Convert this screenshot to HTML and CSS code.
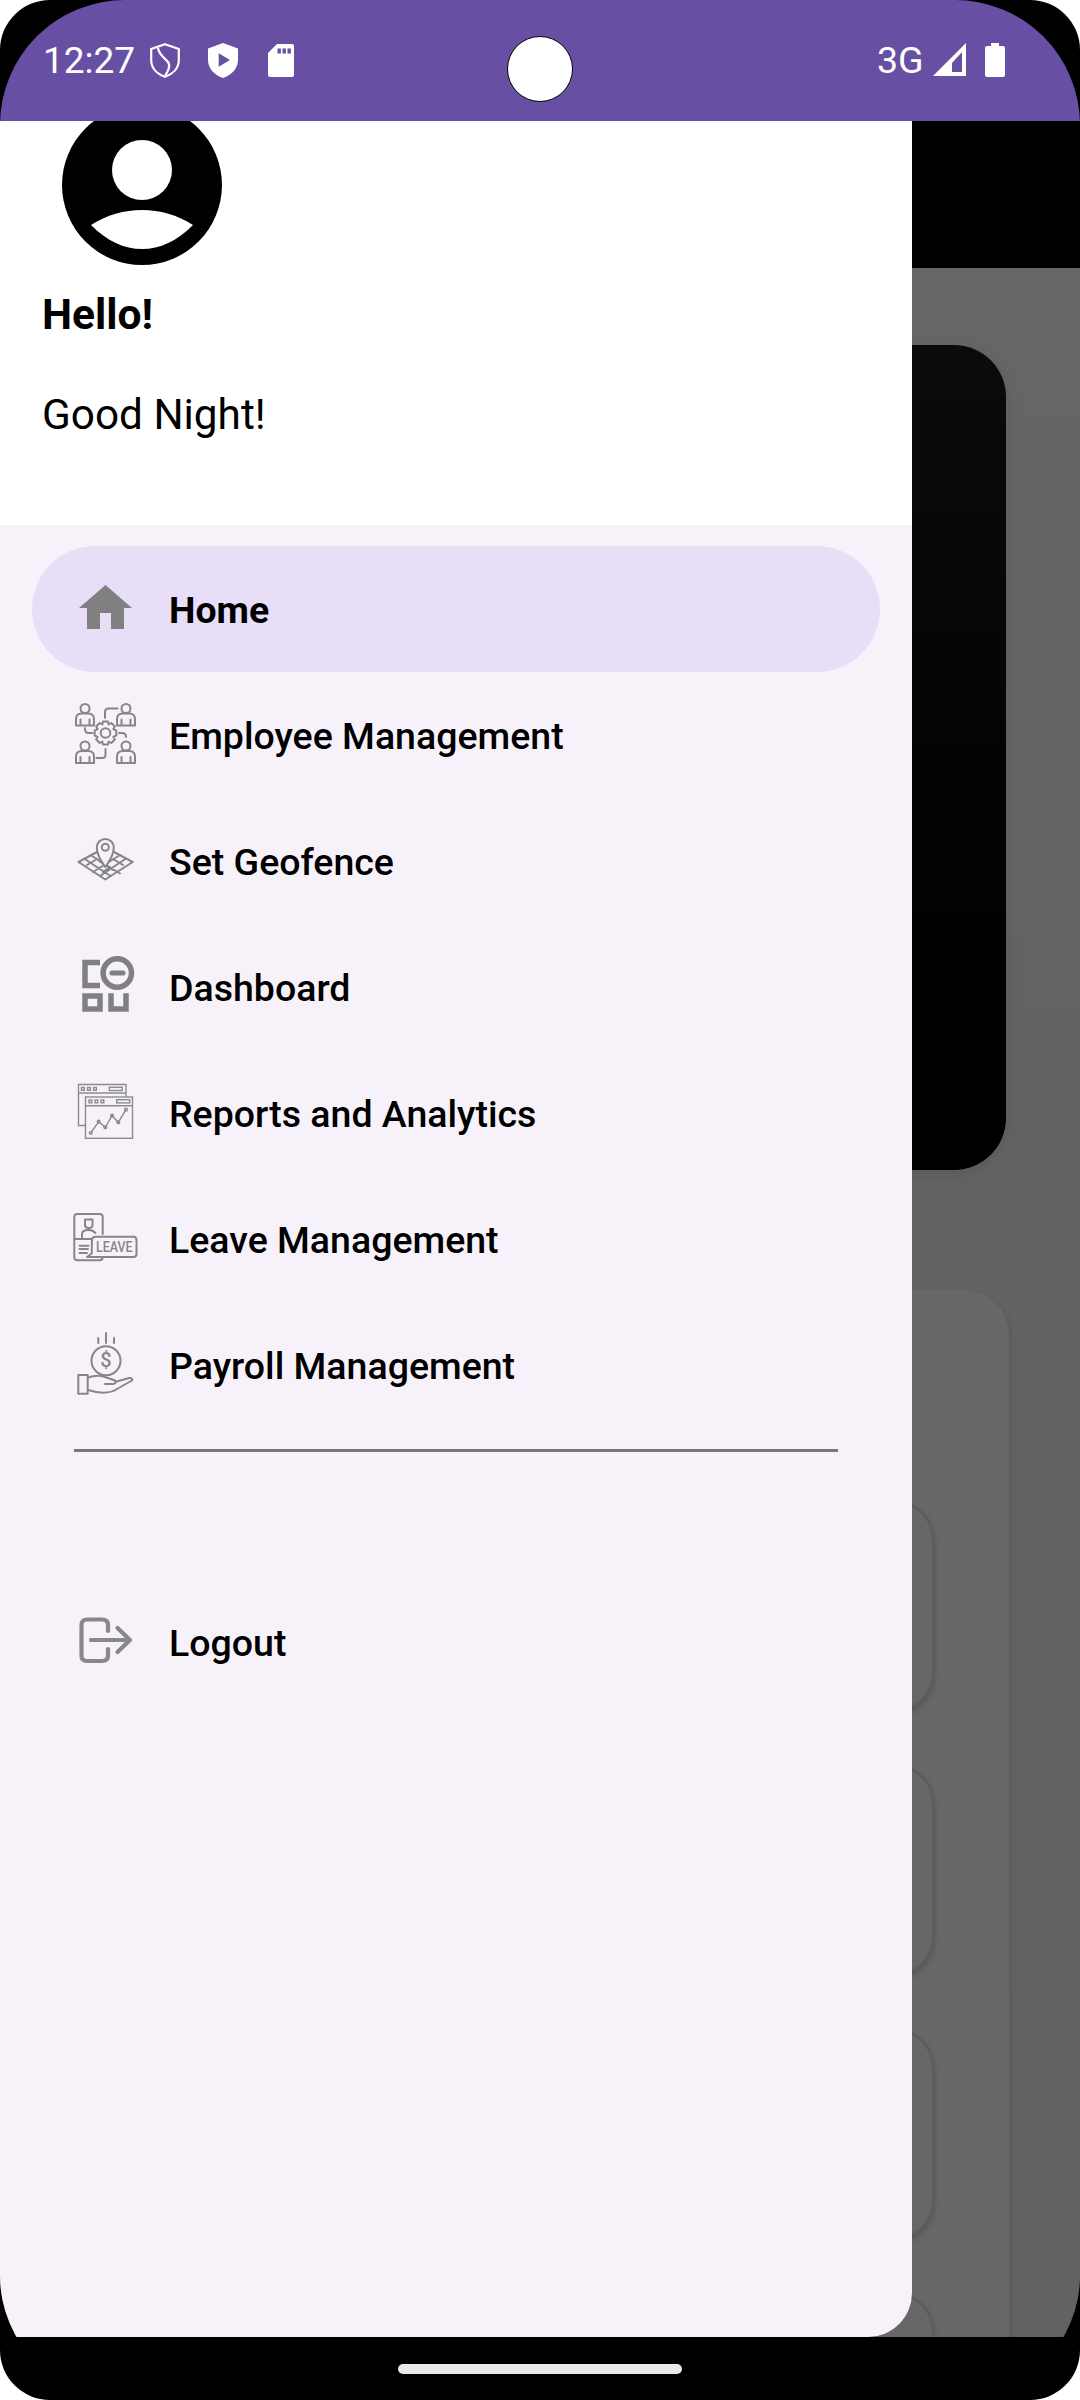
FILE: index.html
```html
<!DOCTYPE html>
<html lang="en">
<head>
<meta charset="utf-8">
<title>Attendance</title>
<link rel="stylesheet" href="styles.css">
</head>
<body>
<div class="device">
  <div class="screen">
    <header class="statusbar">
      <div class="status-left">
        <span class="time">12:27</span>
        <svg class="st st-shield1" viewBox="0 0 30 35"><path class="w-line" d="M15 1.200 28.800 6V17C28.800 25 23 31 15 33.800 7 31 1.200 25 1.200 17V6Z"/><path class="w-line" d="M8 5C9 12 14 14 18 19 21 23 18 28 15 33"/></svg>
        <svg class="st st-shield2" viewBox="0 0 30 35"><path class="w-fill" fill-rule="evenodd" d="M15 0 30 5.500V17C30 25 24 32 15 35 6 32 0 25 0 17V5.500ZM10.700 10.300V23.700L22 17Z"/></svg>
        <svg class="st st-sd" viewBox="0 0 26 33"><path class="w-fill" d="M9 0H24Q26 0 26 2V31Q26 33 24 33H2Q0 33 0 31V9Z"/><path class="p-fill" d="M9.500 4.500h3.400v5H9.500zM14.500 4.500h3.400v5h-3.400zM19.500 4.500h3.400v5h-3.400z"/></svg>
      </div>
      <div class="status-right">
        <span class="net">3G</span>
        <svg class="st st-signal" viewBox="0 0 33 33"><path class="w-fill" fill-rule="evenodd" d="M33 0V33H0ZM19 20 29 9V29H19Z"/></svg>
        <svg class="st st-batt" viewBox="0 0 20 34"><path class="w-fill" d="M6 0H14V3H18Q20 3 20 5V32Q20 34 18 34H2Q0 34 0 32V5Q0 3 2 3H6Z"/></svg>
      </div>
    </header>

    <main class="app">
      <div class="app-top"></div>
      <div class="app-body">
        <div class="hero"></div>
        <div class="panel">
          <div class="tile"></div>
          <div class="tile"></div>
          <div class="tile"></div>
          <div class="tile"></div>
        </div>
      </div>
    </main>

    <footer class="navbar"><span class="handle"></span></footer>

    <aside class="drawer">
      <section class="drawer-head">
        <svg class="avatar" viewBox="0 0 160 160">
          <circle cx="80" cy="80" r="80" fill="#000"/>
          <circle cx="80" cy="65" r="30" fill="#fff"/>
          <path d="M29 120C60 100 100 100 131 120 115 136 98 144 80 144 62 144 45 136 29 120Z" fill="#fff"/>
        </svg>
        <div class="hello">Hello!</div>
        <div class="greet">Good Night!</div>
      </section>
      <nav class="menu">
        <a class="item item-active">
          <svg class="ico" viewBox="0 0 64 64"><path class="g-fill" fill-rule="evenodd" d="M32.500 8 59 31H51V52H38V36H27V52H14V31H6Z"/></svg>
          <span class="label">Home</span>
        </a>
        <a class="item">
          <svg class="ico" viewBox="0 0 64 64"><g class="g-line">
            <circle cx="12" cy="5.500" r="4.500"/><path d="M3 22.500V16Q3 11 8 10.500H16Q21 11 21 16V22.500ZM7.500 22V16.500M16.500 22V16.500"/>
            <circle cx="53" cy="5.500" r="4.500"/><path d="M44 22.500V16Q44 11 49 10.500H57Q62 11 62 16V22.500ZM48.500 22V16.500M57.500 22V16.500"/>
            <circle cx="12" cy="43" r="4.500"/><path d="M3 60V53.500Q3 48.500 8 48H16Q21 48.500 21 53.500V60ZM7.500 59.500V54M16.500 59.500V54"/>
            <circle cx="53" cy="43" r="4.500"/><path d="M44 60V53.500Q44 48.500 49 48H57Q62 48.500 62 53.500V60ZM48.500 59.500V54M57.500 59.500V54"/>
            <path d="M32 15V9Q32 5.500 35.500 5.500H44.500M12 25V26Q12 30 16 30H19.500M46 30H49Q53 30 53 34M32.500 46V52Q32.500 55 29.500 55H23.500"/>
            <path d="M30 18.500H35L35.700 21.500 38.300 20 41.800 23.500 40.300 26.200 43.300 27.500V32.500L40.300 33.800 41.800 36.500 38.300 40 35.700 38.500 35 41.500H30L29.300 38.500 26.700 40 23.200 36.500 24.700 33.800 21.700 32.500V27.500L24.700 26.200 23.200 23.500 26.700 20 29.300 21.500Z"/>
            <circle cx="32.500" cy="30" r="4.800"/>
          </g></svg>
          <span class="label">Employee Management</span>
        </a>
        <a class="item">
          <svg class="ico" viewBox="0 0 64 64"><g class="g-line">
            <path d="M24 23 5.500 33 32.300 50.500 59.700 33 41 23"/>
            <path d="M11 29.500 37.500 47M17.500 26 47 44.500M53 29.500 27 47M47 26 20 43M26 32 40 41M14 36 24 30M40 30 50 36M30 43 37 38M22 37 30 42"/>
            <path class="bgf" d="M32.300 38C29 33 23.800 27 23.800 18.500A8.500 8.500 0 0 1 40.800 18.500C40.800 27 35.600 33 32.300 38Z"/>
            <circle cx="32.300" cy="18.300" r="3.500"/>
          </g></svg>
          <span class="label">Set Geofence</span>
        </a>
        <a class="item">
          <svg class="ico" viewBox="0 0 64 64"><g class="g-thick">
            <path d="M27 7.500H12V30.500H27"/>
            <circle cx="44.300" cy="18" r="14.200"/>
            <rect x="12" y="41" width="15" height="13"/>
            <path d="M38 38.300V54H53V38.300"/>
          </g><path class="g-minus" d="M39 18H50"/></svg>
          <span class="label">Dashboard</span>
        </a>
        <a class="item">
          <svg class="ico" viewBox="0 0 64 64"><g class="g-thin">
            <path d="M53 16V3.500H5.500V44.500H12M5.500 12H53"/>
            <rect x="8.500" y="6.500" width="2.800" height="2.800"/><rect x="14.500" y="6.500" width="2.800" height="2.800"/><rect x="20.500" y="6.500" width="2.800" height="2.800"/><rect x="36.300" y="6.300" width="13" height="3.200"/>
            <rect x="12.500" y="16" width="47" height="41.300"/>
            <path d="M12.500 24.700H59.500"/>
            <rect x="16" y="19" width="2.800" height="2.800"/><rect x="22" y="19" width="2.800" height="2.800"/><rect x="28" y="19" width="2.800" height="2.800"/><rect x="43.700" y="18.700" width="13" height="3.200"/>
            <path d="M17.700 52 25.700 40.700 32.300 46.300 39 34.700 45.300 41.300 53 28.700"/>
            <circle cx="17.700" cy="52" r="1.400"/><circle cx="25.700" cy="40.700" r="1.400"/><circle cx="32.300" cy="46.300" r="1.400"/><circle cx="39" cy="34.700" r="1.400"/><circle cx="45.300" cy="41.300" r="1.400"/><circle cx="53" cy="28.700" r="1.400"/>
          </g></svg>
          <span class="label">Reports and Analytics</span>
        </a>
        <a class="item">
          <svg class="ico" viewBox="0 0 64 64"><g class="g-line">
            <path d="M29.700 27V10Q29.700 7 26.700 7H4.300Q1.300 7 1.300 10V50.300Q1.300 53.300 4.300 53.300H26.700Q29.700 53.300 29.700 50.300V50"/>
            <path d="M12 12.500H19.500V18Q19.500 21 15.700 21 12 21 12 18ZM9 31V27Q9 23 15.700 23 20 23 22.500 26M1.300 32H18M6.500 38.700H15.500M6.500 42H15M6.500 46H14"/>
            <path d="M19 33Q19 29.700 22.500 29.700H60.500Q63.500 29.700 63.500 33V47Q63.500 50 60.500 50H14L18.700 46.500Z"/>
          </g><text class="leave" x="23" y="45" textLength="36.500" lengthAdjust="spacingAndGlyphs">LEAVE</text></svg>
          <span class="label">Leave Management</span>
        </a>
        <a class="item">
          <svg class="ico" viewBox="0 0 64 64"><g class="g-line">
            <path d="M33 0V10M25.300 5V10M41 5V10"/>
            <circle cx="33" cy="27.700" r="14.500"/>
            <rect x="5.300" y="42" width="9.400" height="18.700"/>
            <path d="M15 44.500C22 42 27 42 32 44L42 47.500C44 49.500 42 51 40 51H32M42 49 56 45C60 44.500 60 47.500 58 48L44 56C38 60 28 61 15 57"/>
          </g><text class="dollar" x="33" y="34">$</text></svg>
          <span class="label">Payroll Management</span>
        </a>
        <hr class="rule">
        <a class="item item-logout">
          <svg class="ico" viewBox="0 0 64 64"><g class="g-logout">
            <path d="M35 21V15Q35 9.500 29 9.500H14Q8.500 9.500 8.500 15V45.500Q8.500 51 14 51H29Q35 51 35 45.500V39"/>
            <path d="M18 30H56M44.500 18 57 30 44.500 42"/>
          </g></svg>
          <span class="label">Logout</span>
        </a>
      </nav>
    </aside>

    <span class="camera"></span>
  </div>
</div>
</body>
</html>
```

FILE: styles.css
```css
* { box-sizing: border-box; }
html, body { margin: 0; padding: 0; background: #fff; }
body { font-family: Roboto, "Liberation Sans", sans-serif; }

.device { width: 1080px; height: 2400px; background: #000; border-radius: 50px; overflow: hidden; }
.screen { position: relative; width: 1080px; height: 2400px; background: #000; border-radius: 125px; overflow: hidden; display: flex; flex-direction: column; }

.statusbar { height: 121px; flex: none; background: #6750a4; color: #fff; display: flex; justify-content: space-between; padding: 43px 75px 0 43px; }
.status-left, .status-right { display: flex; align-items: flex-start; }
.time { font-size: 37px; line-height: 35px; width: 107px; }
.net { font-size: 37.500px; line-height: 34px; width: 56px; }
.st { display: block; flex: none; }
.st-shield1, .st-shield2 { width: 30px; height: 35px; }
.st-shield1 { margin-right: 28px; }
.st-shield2 { margin-right: 30px; }
.st-sd { width: 26px; height: 33px; margin-top: 1px; }
.st-signal { width: 33px; height: 33px; margin-right: 19px; }
.st-batt { width: 20px; height: 34px; }
.w-line { fill: none; stroke: #fff; stroke-width: 2.200; }
.w-fill { fill: #fff; }
.p-fill { fill: #6750a4; }

.camera { position: absolute; left: 507px; top: 36px; width: 66px; height: 66px; border-radius: 50%; background: #fff; border: 1px solid #000; }

.app { flex: 1; min-height: 0; overflow: hidden; display: flex; flex-direction: column; }
.app-top { height: 147px; flex: none; background: #000; }
.app-body { flex: 1; background: linear-gradient(180deg, #666 0%, #636363 40%, #626262 100%); padding-top: 77px; overflow: hidden; }
.hero { height: 825px; margin: 0 74px; border-radius: 52px; background: linear-gradient(180deg, #0b0b0b 0%, #020202 60%, #000 100%); box-shadow: 0 4px 14px rgba(0,0,0,.1); }
.panel { height: 1100px; margin: 120px 71px 0; padding: 210px 75px 0 40px; border-radius: 44px; background: #676767; box-shadow: 1px 3px 6px rgba(0,0,0,.14); display: flex; flex-direction: column; gap: 52px; }
.tile { height: 212px; flex: none; border-radius: 40px; background: #676767; border: 2px solid #5d5d5d; box-shadow: 0 3px 5px 1px rgba(0,0,0,.14); }

.navbar { height: 63px; flex: none; background: #000; display: flex; justify-content: center; padding-top: 27px; }
.handle { width: 284px; height: 10px; border-radius: 5px; background: #e9e9e9; }

.drawer { position: absolute; left: 0; top: 121px; width: 912px; height: 2216px; background: #f7f2fa; border-radius: 0 0 44px 0; overflow: hidden; display: flex; flex-direction: column; }
.drawer-head { height: 404px; flex: none; background: #fff; padding-left: 42px; overflow: hidden; color: #000; }
.avatar { display: block; width: 160px; height: 160px; margin: -16px 0 0 20px; }
.hello { font-size: 42.500px; font-weight: 700; line-height: 50px; margin-top: 25px; }
.greet { font-size: 42.300px; line-height: 50px; margin-top: 50px; }

.menu { padding: 21px 32px 0; display: flex; flex-direction: column; }
.item { height: 126px; flex: none; width: 848px; display: flex; align-items: center; gap: 32px; padding-left: 41px; border-radius: 63px; color: #000; font-size: 37.500px; font-weight: 490; }
.label { padding-top: 2px; }
.item-active { background: #e8def8; font-weight: 680; font-size: 37.400px; }
.item-logout { margin-top: 127px; }
.ico { display: block; width: 64px; height: 64px; flex: none; overflow: visible; }
.rule { margin: 21px 0 0 42px; width: 764px; height: 3px; border: 0; background: #79747e; }

.g-fill { fill: #808080; }
.g-line, .g-thick, .g-thin, .g-logout { fill: none; stroke: #868686; stroke-linecap: round; stroke-linejoin: round; }
.g-line { stroke-width: 2; }
.g-thick { stroke: #808080; stroke-width: 5.500; stroke-linecap: butt; stroke-linejoin: miter; }
.g-minus { fill: none; stroke: #808080; stroke-width: 5; stroke-linecap: round; }
.g-thin { stroke: #8c8c8c; stroke-width: 1.400; stroke-linecap: butt; stroke-linejoin: miter; }
.g-logout { stroke: #888; stroke-width: 4.200; }
.bgf { fill: #f7f2fa; }
.leave { font-family: Roboto, sans-serif; font-size: 14px; font-weight: 500; fill: #868686; }
.dollar { font-family: Roboto, sans-serif; font-size: 20px; fill: #868686; text-anchor: middle; }
```
